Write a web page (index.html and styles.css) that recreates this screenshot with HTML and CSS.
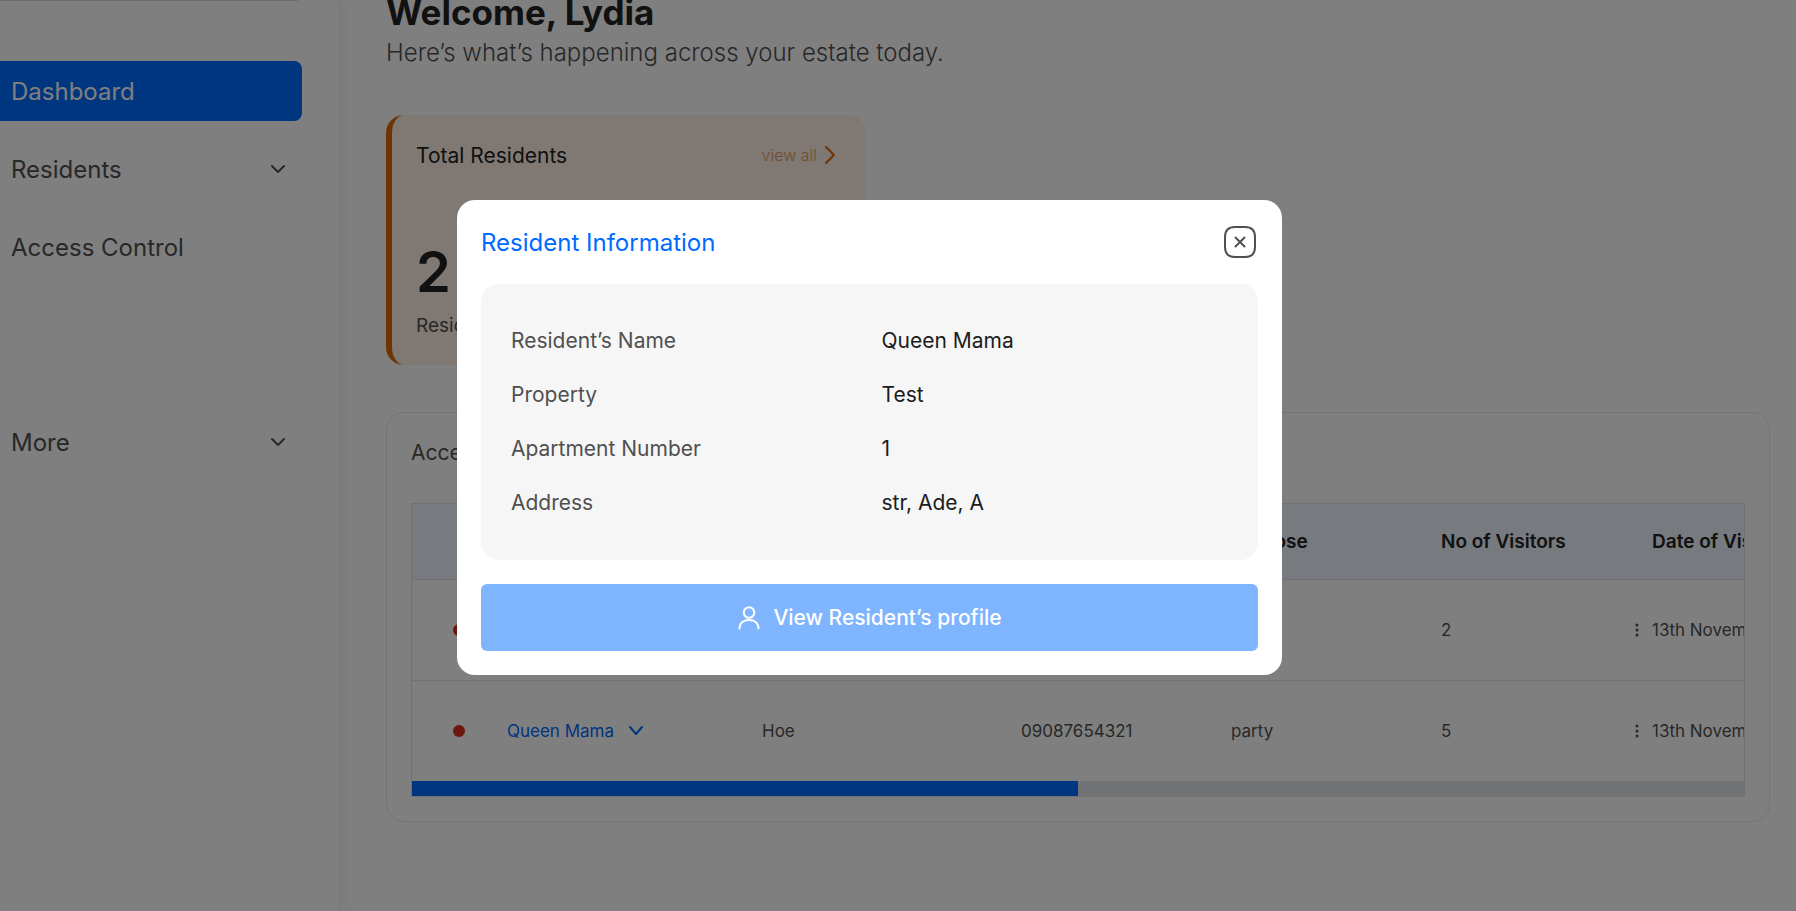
FILE: index.html
```
<!DOCTYPE html>
<html lang="en">
<head>
  <meta charset="utf-8">
  <meta name="viewport" content="width=device-width, initial-scale=1">
  <title>Dashboard</title>
  <link rel="stylesheet" href="styles.css">
</head>
<body>
  <div class="app">
    <aside class="sidebar">
      <hr class="divider">
      <nav class="nav" aria-label="Main">
        <a class="nav-item nav-item-active" href="#dashboard">Dashboard</a>
        <button class="nav-item" type="button">Residents
          <svg class="nav-chevron" viewBox="0 0 16 10" aria-hidden="true"><path d="M2 2l6 6 6-6"/></svg>
        </button>
        <a class="nav-item" href="#access">Access Control</a>
        <button class="nav-item nav-item-more" type="button">More
          <svg class="nav-chevron" viewBox="0 0 16 10" aria-hidden="true"><path d="M2 2l6 6 6-6"/></svg>
        </button>
      </nav>
    </aside>

    <main class="main">
      <h1 class="welcome">Welcome, Lydia</h1>
      <p class="subtitle">Here’s what’s happening across your estate today.</p>

      <section class="stat">
        <div class="stat-head">
          <h2 class="stat-title">Total Residents</h2>
          <a class="stat-link" href="#residents">view all
            <svg class="stat-arrow" viewBox="0 0 12 20" aria-hidden="true"><path d="M2 2l8 8-8 8"/></svg>
          </a>
        </div>
        <p class="stat-value">2</p>
        <p class="stat-label">Residents</p>
      </section>

      <section class="panel">
        <h2 class="panel-title">Access Control</h2>
        <div class="table-box">
          <div class="table-scroll">
            <table class="visits">
              <colgroup>
                <col class="col-status"><col class="col-name"><col class="col-guest"><col class="col-std"><col class="col-std"><col class="col-count"><col>
              </colgroup>
              <thead>
                <tr><th></th><th>Resident</th><th>Visitor</th><th>Phone</th><th>Purpose</th><th>No of Visitors</th><th>Date of Visit</th></tr>
              </thead>
              <tbody>
                <tr>
                  <td class="status"><span class="dot"></span></td>
                  <td><button class="resident" type="button">Queen <svg class="resident-chevron" viewBox="0 0 16 10" aria-hidden="true"><path d="M2 1l6 7 6-7"/></svg></button></td>
                  <td>Hoe</td><td>09087654321</td><td>party</td>
                  <td><div class="count">2 <svg class="kebab" viewBox="0 0 4 14" aria-hidden="true"><circle cx="2" cy="2" r="1.5"/><circle cx="2" cy="7" r="1.5"/><circle cx="2" cy="12" r="1.5"/></svg></div></td>
                  <td>13th November</td>
                </tr>
                <tr>
                  <td class="status"><span class="dot"></span></td>
                  <td><button class="resident" type="button">Queen Mama <svg class="resident-chevron" viewBox="0 0 16 10" aria-hidden="true"><path d="M2 1l6 7 6-7"/></svg></button></td>
                  <td>Hoe</td><td>09087654321</td><td>party</td>
                  <td><div class="count">5 <svg class="kebab" viewBox="0 0 4 14" aria-hidden="true"><circle cx="2" cy="2" r="1.5"/><circle cx="2" cy="7" r="1.5"/><circle cx="2" cy="12" r="1.5"/></svg></div></td>
                  <td>13th November</td>
                </tr>
              </tbody>
            </table>
          </div>
          <div class="scroll-track"><div class="scroll-thumb"></div></div>
        </div>
      </section>
    </main>
  </div>

  <div class="overlay">
    <div class="modal" role="dialog" aria-modal="true" aria-labelledby="modal-title">
      <header class="modal-head">
        <h2 class="modal-title" id="modal-title">Resident Information</h2>
        <button class="modal-close" type="button" aria-label="Close">
          <svg viewBox="0 0 36 36" aria-hidden="true"><path d="M13 3h10c7 0 10 3 10 10v10c0 7-3 10-10 10H13C6 33 3 30 3 23V13C3 6 6 3 13 3z"/><path d="M13.500 13.500l9 9m0-9l-9 9"/></svg>
        </button>
      </header>
      <dl class="details">
        <dt>Resident’s Name</dt><dd>Queen Mama</dd>
        <dt>Property</dt><dd>Test</dd>
        <dt>Apartment Number</dt><dd>1</dd>
        <dt>Address</dt><dd>str, Ade, A</dd>
      </dl>
      <button class="profile-button" type="button">
        <svg class="profile-icon" viewBox="0 0 24 24" aria-hidden="true"><circle cx="12" cy="6.500" r="5.300"/><path d="M2.500 22.500c0-5.500 4-8.500 9.500-8.500s9.500 3 9.500 8.500"/></svg>
        View Resident’s profile
      </button>
    </div>
  </div>
</body>
</html>
```
FILE: styles.css
```
* {
  box-sizing: border-box;
}

body {
  margin: 0;
  background: #fff;
  color: #505050;
  font-family: Inter, "Open Sans", sans-serif;
  font-size: 17px;
}

h1, h2, p, dl, dd {
  margin: 0;
  font-weight: 400;
}

button {
  border: 0;
  padding: 0;
  background: none;
  color: inherit;
  font: inherit;
  cursor: pointer;
}

a {
  color: inherit;
  text-decoration: none;
}

svg {
  display: block;
  flex: none;
  fill: none;
  stroke: currentColor;
  stroke-width: 2;
  stroke-linecap: round;
  stroke-linejoin: round;
}

.app {
  display: flex;
  height: 100vh;
  overflow: hidden;
}

.sidebar {
  flex: 0 0 338px;
  padding-right: 36px;
  box-shadow: 4px 0 12px rgba(0, 0, 0, 0.06);
}

.divider {
  margin: 0 4px 0 0;
  border: 0;
  border-top: 1px solid #dcdcdc;
}

.nav {
  display: flex;
  flex-direction: column;
  gap: 18px;
  padding-top: 60px;
}

.nav-item {
  display: flex;
  align-items: center;
  justify-content: space-between;
  height: 60px;
  padding: 0 16px 0 11px;
  font-size: 24px;
}

.nav-item-active {
  border-radius: 0 8px 8px 0;
  background: #006aff;
  color: #fff;
}

.nav-item-more {
  margin-top: 117px;
}

.nav-chevron {
  width: 16px;
  height: 10px;
}

.main {
  flex: 1;
  min-width: 0;
  padding: 0 26px 0 48px;
}

.welcome {
  color: #222;
  font-size: 35px;
  font-weight: 700;
  line-height: 24px;
}

.subtitle {
  margin-top: 13px;
  font-size: 24px;
  font-weight: 300;
  line-height: 32px;
}

.stat {
  max-width: 480px;
  margin-top: 46px;
  border-left: 6px solid #dc6803;
  border-radius: 18px;
  padding: 24px 30px 25px 24px;
  background: #fff1e6;
}

.stat-head {
  display: flex;
  align-items: center;
  justify-content: space-between;
  height: 32px;
}

.stat-title {
  color: #222;
  font-size: 21px;
}

.stat-link {
  display: flex;
  align-items: center;
  gap: 7px;
  color: #e59a5a;
  font-size: 16px;
  font-weight: 300;
}

.stat-arrow {
  width: 12px;
  height: 20px;
  color: #dc6803;
}

.stat-value {
  margin-top: 73px;
  color: #222;
  font-size: 56px;
  font-weight: 600;
  line-height: 56px;
}

.stat-label {
  margin-top: 12px;
  font-size: 19px;
  line-height: 28px;
}

.panel {
  margin-top: 47px;
  border: 1px solid #e8e8e8;
  border-radius: 18px;
  padding: 24px;
}

.panel-title {
  font-size: 21px;
  line-height: 32px;
}

.table-box {
  margin-top: 34px;
  border: 1px solid #e4e4e6;
}

.table-scroll {
  overflow: hidden;
}

.visits {
  width: 200%;
  table-layout: fixed;
  border-collapse: collapse;
}

.col-status {
  width: 95px;
}

.col-name {
  width: 255px;
}

.col-guest {
  width: 259px;
}

.col-std {
  width: 210px;
}

.col-count {
  width: 211px;
}

.visits th,
.visits td {
  padding: 0;
  text-align: left;
  vertical-align: middle;
}

.visits th {
  height: 75px;
  background: #eef4ff;
  color: #222;
  font-size: 19px;
  font-weight: 600;
}

.visits td {
  height: 101px;
  border-top: 1px solid #e4e4e6;
}

.visits .status {
  padding-left: 41px;
}

.dot {
  display: block;
  width: 12px;
  height: 12px;
  border-radius: 50%;
  background: #d92d20;
}

.resident {
  display: flex;
  align-items: center;
  gap: 14px;
  color: #006aff;
}

.resident-chevron {
  width: 16px;
  height: 10px;
}

.count {
  display: flex;
  align-items: center;
  justify-content: space-between;
  padding-right: 13px;
}

.kebab {
  width: 4px;
  height: 14px;
  fill: currentColor;
  stroke: none;
}

.scroll-track {
  height: 15px;
  background: #e2e4e7;
}

.scroll-thumb {
  width: 50%;
  height: 100%;
  background: #006aff;
}

.overlay {
  position: fixed;
  inset: 0;
  display: flex;
  align-items: center;
  justify-content: center;
  padding: 0 57px 36px 0;
  background: rgba(0, 0, 0, 0.5);
}

.modal {
  display: flex;
  flex-direction: column;
  gap: 24px;
  width: 100%;
  max-width: 825px;
  border-radius: 18px;
  padding: 24px;
  background: #fff;
}

.modal-head {
  display: flex;
  align-items: center;
  justify-content: space-between;
}

.modal-title {
  color: #006aff;
  font-size: 24px;
}

.modal-close {
  width: 36px;
  height: 36px;
}

.details {
  display: grid;
  grid-template-columns: 1fr 1fr;
  column-gap: 24px;
  border-radius: 18px;
  padding: 30px;
  background: #f6f6f6;
  font-size: 21px;
  line-height: 54px;
}

.details dd {
  color: #1c1c1c;
}

.profile-button {
  display: flex;
  align-items: center;
  justify-content: center;
  gap: 12px;
  height: 67px;
  border-radius: 6px;
  background: #7fb4ff;
  color: #fff;
  font-size: 21px;
  font-weight: 500;
}

.profile-icon {
  width: 24px;
  height: 24px;
}
```
